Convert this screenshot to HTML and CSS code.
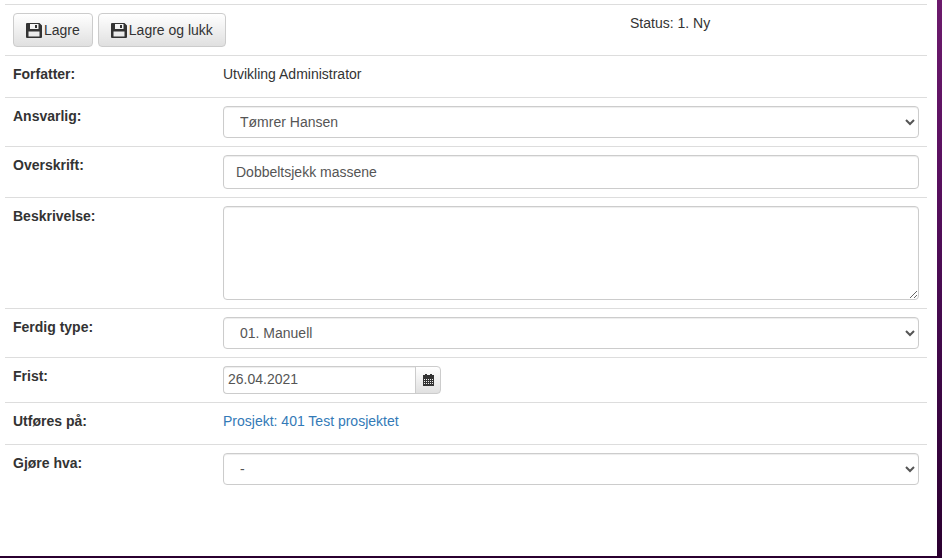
FILE: index.html
```html
<!DOCTYPE html>
<html lang="no">
<head>
    <meta charset="UTF-8">
    <title>Oppgave</title>
    <link rel="stylesheet" href="styles.css">
</head>
<body>

<div class="content">
    <form class="taskForm" onsubmit="return false">
        <div class="row toolbar">
            <div class="buttons">
                <button class="btn" type="submit">
                    <svg class="disk" viewBox="0 0 16 16"><path d="M1 1H13.5L16 3.5V15a1 1 0 0 1-1 1H1a1 1 0 0 1-1-1V2a1 1 0 0 1 1-1ZM4 2V7H12.5V2ZM2.5 9.5V14.5H13.5V9.5ZM9 3H11V6H9Z" fill-rule="evenodd"/></svg>Lagre
                </button>
                <button class="btn" type="submit">
                    <svg class="disk" viewBox="0 0 16 16"><path d="M1 1H13.5L16 3.5V15a1 1 0 0 1-1 1H1a1 1 0 0 1-1-1V2a1 1 0 0 1 1-1ZM4 2V7H12.5V2ZM2.5 9.5V14.5H13.5V9.5ZM9 3H11V6H9Z" fill-rule="evenodd"/></svg>Lagre og lukk
                </button>
            </div>
            <div class="status">Status: 1. Ny</div>
        </div>

        <div class="row textRow">
            <label>Forfatter:</label>
            <div>Utvikling Administrator</div>
        </div>

        <div class="row">
            <label>Ansvarlig:</label>
            <select class="control">
                <option>Tømrer Hansen</option>
            </select>
        </div>

        <div class="row">
            <label>Overskrift:</label>
            <input class="control tall" type="text" value="Dobbeltsjekk massene">
        </div>

        <div class="row">
            <label>Beskrivelse:</label>
            <textarea class="control descr"></textarea>
        </div>

        <div class="row">
            <label>Ferdig type:</label>
            <select class="control">
                <option>01. Manuell</option>
            </select>
        </div>

        <div class="row">
            <label>Frist:</label>
            <div class="dateGroup">
                <input class="dateInput" type="text" value="26.04.2021">
                <span class="dateBtn">
                    <svg class="cal" viewBox="0 0 11 12"><path d="M2 0h2v1H7V0h2v1h2V12H0V1h2ZM1 5h1v1H1ZM3 5h1v1H3ZM5 5h1v1H5ZM7 5h1v1H7ZM9 5h1v1H9ZM1 7h1v1H1ZM3 7h1v1H3ZM5 7h1v1H5ZM7 7h1v1H7ZM9 7h1v1H9ZM1 9h1v1H1ZM3 9h1v1H3ZM5 9h1v1H5ZM7 9h1v1H7ZM9 9h1v1H9Z" fill-rule="evenodd"/></svg>
                </span>
            </div>
        </div>

        <div class="row textRow">
            <label>Utføres på:</label>
            <a href="#">Prosjekt: 401 Test prosjektet</a>
        </div>

        <div class="row">
            <label>Gjøre hva:</label>
            <select class="control">
                <option>-</option>
            </select>
        </div>
    </form>
</div>

</body>
</html>
```

FILE: styles.css
```css
* {
    box-sizing: border-box;
}

html, body {
    height: 100%;
}

body {
    margin: 0;
    overflow: hidden;
    font-family: "Liberation Sans", Arial, sans-serif;
    font-size: 14px;
    line-height: 20px;
    color: #333333;
    background: linear-gradient(180deg, #6c1a6c 0%, #5a1060 30%, #43094c 60%, #2b0030 100%);
}

.content {
    width: 937px;
    height: 556px;
    padding: 4px 10px 0 5px;
    background-color: #ffffff;
}

.row {
    display: grid;
    grid-template-columns: 210px 1fr;
    align-items: start;
    padding: 8px;
    border-top: 1px solid #dddddd;
}

.textRow {
    padding-bottom: 13px;
}

.row label {
    font-weight: bold;
}

.toolbar {
    display: flex;
    justify-content: flex-start;
}

.buttons {
    display: flex;
    gap: 5px;
    width: 617px;
}

.btn {
    display: flex;
    align-items: center;
    height: 34px;
    padding: 0 12px;
    font: inherit;
    color: #333333;
    background: linear-gradient(180deg, #ffffff 0%, #e0e0e0 100%);
    border: 1px solid #cccccc;
    border-radius: 4px;
}

.disk {
    width: 16px;
    height: 16px;
    margin-right: 2px;
    fill: #333333;
}

.status {
    line-height: 20px;
}

.control {
    display: block;
    width: 100%;
    height: 32px;
    padding: 6px 12px;
    font: inherit;
    color: #555555;
    background-color: #ffffff;
    border: 1px solid #cccccc;
    border-radius: 4px;
    box-shadow: inset 0 1px 1px rgba(0, 0, 0, .075);
}

.tall {
    height: 34px;
}

.descr {
    height: 94px;
    resize: vertical;
}

.dateGroup {
    display: flex;
    width: 218px;
    height: 28px;
}

.dateInput {
    width: 193px;
    height: 28px;
    padding: 3px 4px 5px;
    font: inherit;
    color: #555555;
    border: 1px solid #cccccc;
    border-right: 0;
    border-radius: 4px 0 0 4px;
    box-shadow: inset 0 1px 1px rgba(0, 0, 0, .075);
}

.dateBtn {
    display: flex;
    align-items: center;
    justify-content: center;
    width: 26px;
    margin-left: -1px;
    background: linear-gradient(180deg, #ffffff 0%, #e0e0e0 100%);
    border: 1px solid #cccccc;
    border-radius: 0 4px 4px 0;
}

.cal {
    width: 11px;
    height: 12px;
    fill: #333333;
}

a {
    color: #337ab7;
    text-decoration: none;
}
```
